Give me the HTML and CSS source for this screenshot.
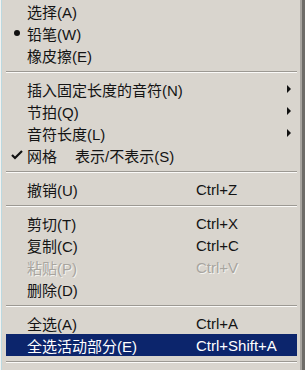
FILE: index.html
```html
<!DOCTYPE html>
<html lang="zh-CN">
<head>
<meta charset="utf-8">
<title>菜单</title>
<link rel="stylesheet" href="styles.css">
</head>
<body>
<div class="menu">
  <div class="item"><span class="label">选择(A)</span></div>
  <div class="item"><span class="mark"><span class="bullet"></span></span><span class="label">铅笔(W)</span></div>
  <div class="item"><span class="label">橡皮擦(E)</span></div>
  <div class="sep"></div>
  <div class="item"><span class="label">插入固定长度的音符(N)</span><span class="arrow"></span></div>
  <div class="item"><span class="label">节拍(Q)</span><span class="arrow"></span></div>
  <div class="item"><span class="label">音符长度(L)</span><span class="arrow"></span></div>
  <div class="item"><span class="mark"><svg class="check" width="12" height="10" viewBox="0 0 12 10"><path d="M1 5 L4 8 L11 1" fill="none" stroke="#111" stroke-width="2.2"/></svg></span><span class="label">网格<span class="gap"></span>表示/不表示(S)</span></div>
  <div class="sep"></div>
  <div class="item"><span class="label">撤销(U)</span><span class="key">Ctrl+Z</span></div>
  <div class="sep"></div>
  <div class="item"><span class="label">剪切(T)</span><span class="key">Ctrl+X</span></div>
  <div class="item"><span class="label">复制(C)</span><span class="key">Ctrl+C</span></div>
  <div class="item disabled"><span class="label">粘贴(P)</span><span class="key">Ctrl+V</span></div>
  <div class="item"><span class="label">删除(D)</span></div>
  <div class="sep"></div>
  <div class="item"><span class="label">全选(A)</span><span class="key">Ctrl+A</span></div>
  <div class="item active"><span class="label">全选活动部分(E)</span><span class="key">Ctrl+Shift+A</span></div>
  <div class="sep"></div>
</div>
</body>
</html>
```
FILE: styles.css
```css
html, body {
  margin: 0;
  padding: 0;
  background: #d9d5ce;
}
.menu {
  width: 305px;
  height: 370px;
  box-sizing: border-box;
  padding: 0 5px 0 5px;
  background: #d9d5ce;
  border-left: 1px solid #f4f3f0;
  border-right: 3px solid #6e6c68;
  box-shadow: inset -2px 0 0 #a8a5a0, inset 1px 0 0 #bcd9e0;
  font-family: "Liberation Sans", "Noto Sans CJK SC", sans-serif;
  font-size: 15px;
  color: #141414;
  overflow: hidden;
}
.item {
  height: 22px;
  display: flex;
  align-items: center;
  position: relative;
}
.mark {
  width: 21px;
  display: flex;
  justify-content: center;
  align-items: center;
  position: absolute;
  left: 0;
  top: 0;
  height: 22px;
}
.bullet {
  width: 6px;
  height: 6px;
  border-radius: 50%;
  background: #111;
  margin-left: 1px;
}
.check {
  display: block;
  margin-left: 0;
}
.label {
  padding-left: 21px;
  width: 169px;
  white-space: nowrap;
}
.gap {
  display: inline-block;
  width: 18px;
}
.key {
  white-space: nowrap;
}
.arrow {
  position: absolute;
  right: 6px;
  top: 7px;
  width: 0;
  height: 0;
  border-top: 4px solid transparent;
  border-bottom: 4px solid transparent;
  border-left: 4px solid #111;
}
.disabled {
  color: #a8a59f;
  text-shadow: 1px 1px 0 #f4f3ef;
}
.active {
  background: #0c256c;
  color: #ffffff;
}
.sep {
  height: 12px;
  display: flex;
  flex-direction: column;
  justify-content: center;
}
.sep::before {
  content: "";
  display: block;
  height: 1px;
  background: #9c9993;
}
.sep::after {
  content: "";
  display: block;
  height: 1px;
  background: #fbfaf8;
}
```
